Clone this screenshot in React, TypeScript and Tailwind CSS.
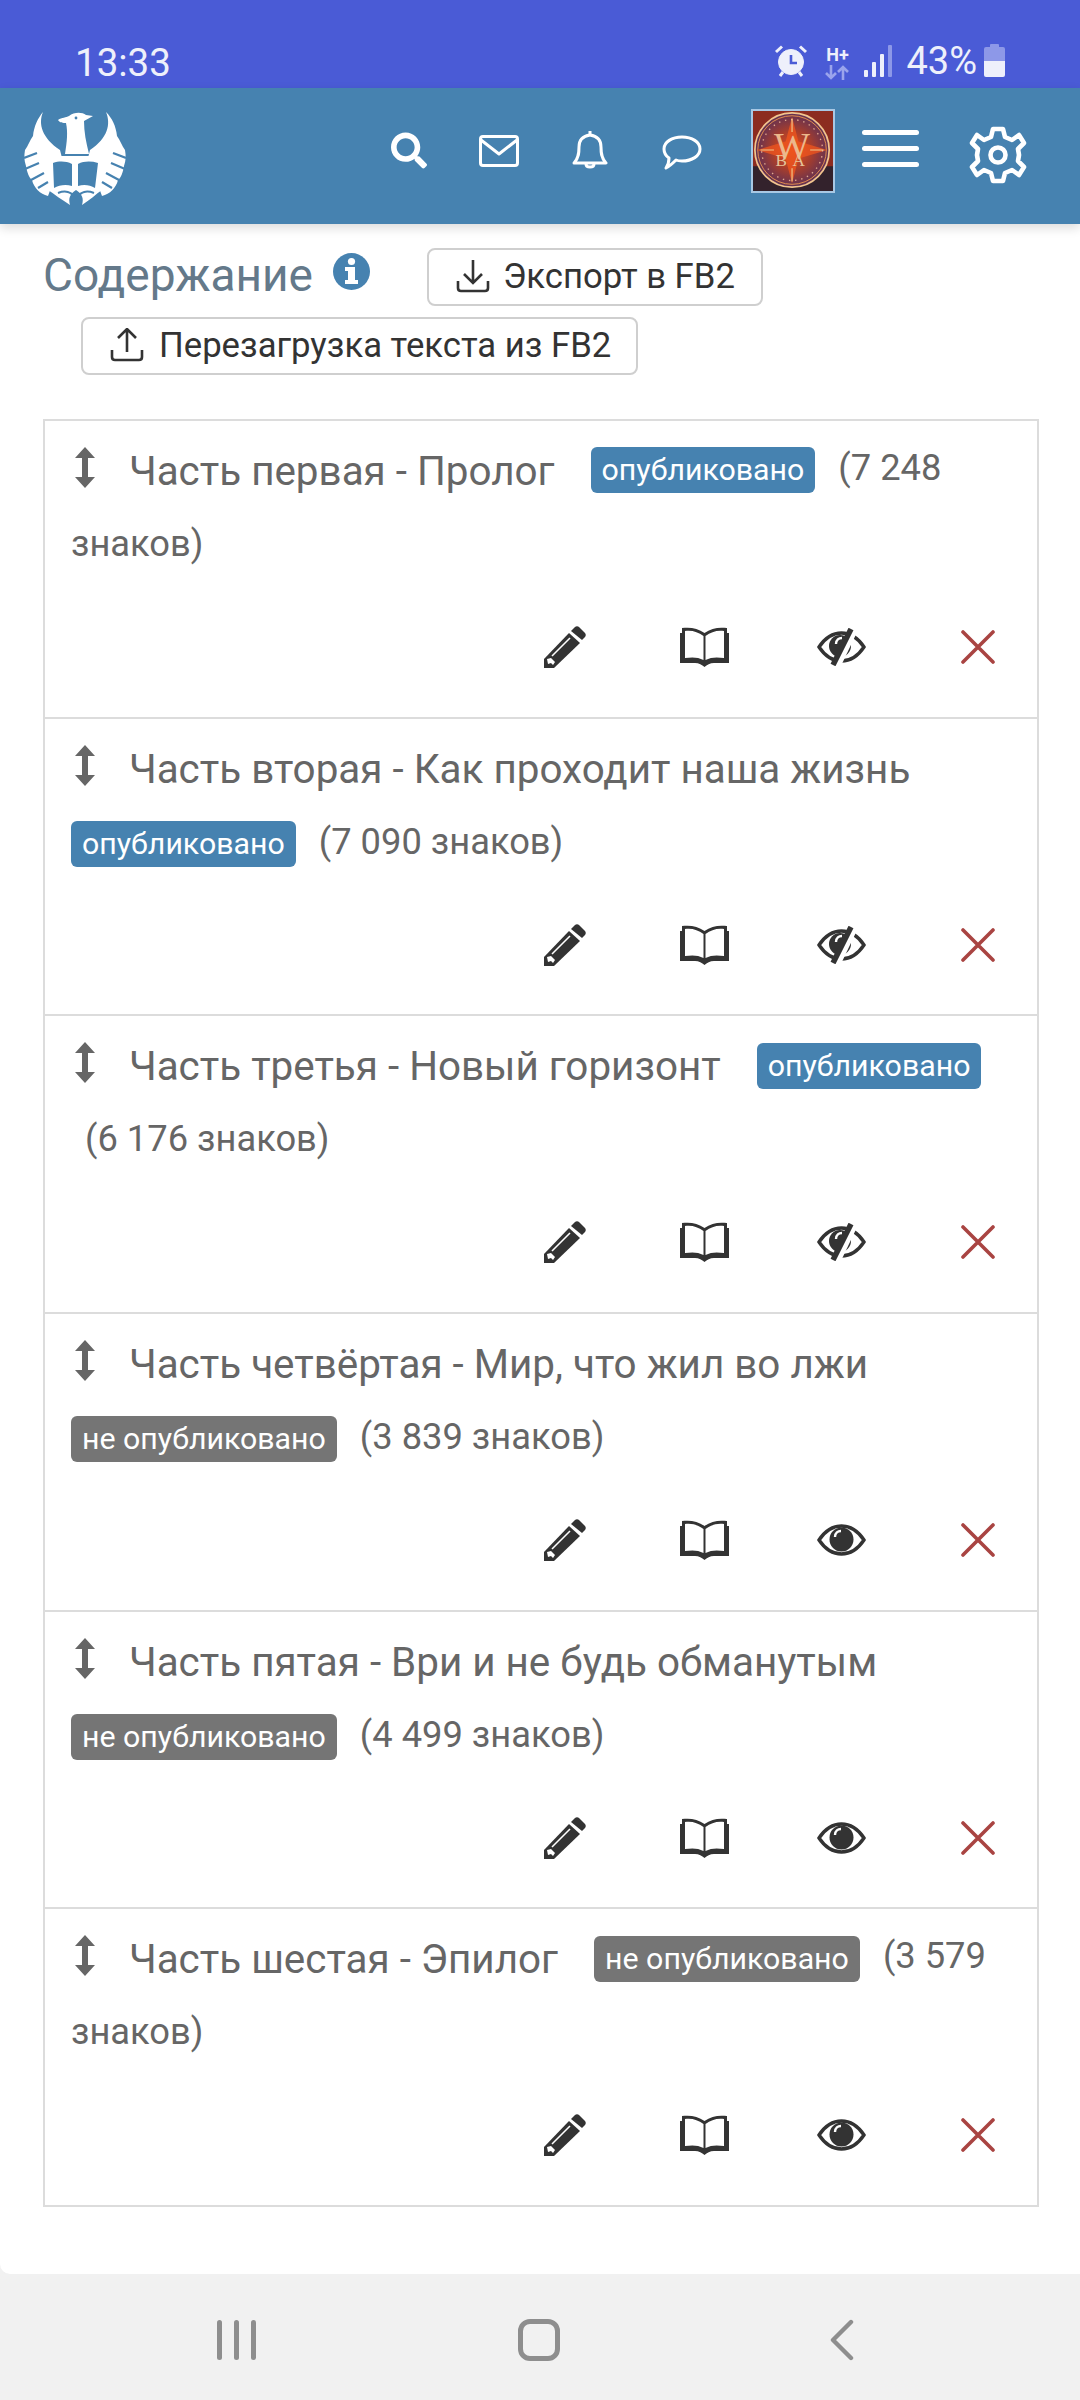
import React from 'react';
import { FaSearch } from 'react-icons/fa';

const parts = [
  { title: 'Часть первая - Пролог', count: '(7 248 знаков)', published: true },
  { title: 'Часть вторая - Как проходит наша жизнь', count: '(7 090 знаков)', published: true },
  { title: 'Часть третья - Новый горизонт', count: '(6 176 знаков)', published: true },
  { title: 'Часть четвёртая - Мир, что жил во лжи', count: '(3 839 знаков)', published: false },
  { title: 'Часть пятая - Ври и не будь обманутым', count: '(4 499 знаков)', published: false },
  { title: 'Часть шестая - Эпилог', count: '(3 579 знаков)', published: false },
];

const Logo = () => (
  <svg width="102" height="94" viewBox="0 0 102 94" fill="#fff">
    {/* head and neck */}
    <path d="M34 8 C38 5 42 6 45 4 C50 0 58 0 62 3 L69 4 L60 9 C60 20 62 30 65 42 L41 42 C43 30 44 20 42 11 C39 11 36 11 34 8 Z" />
    {/* left wing */}
    <path d="M19 0 C14 12 18 26 36 38 L38 46 L24 84 C16 82 10 76 8 68 C5 66 3 60 2 54 C0 48 0 44 1 38 C4 34 6 28 9 24 C10 14 14 6 19 0 Z" />
    {/* right wing */}
    <path d="M82 0 C87 12 84 26 66 38 L64 46 L78 84 C86 82 92 76 94 68 C97 66 99 60 100 54 C102 48 102 44 101 38 C98 34 96 28 93 24 C92 14 88 6 82 0 Z" />
    {/* book and tail */}
    <path d="M21 44 H83 L78 78 C72 82 66 88 58 93 C60 86 58 82 52 78 C46 82 44 86 46 93 C38 88 30 82 24 78 Z" />
    <path d="M29 51 C35 49 42 49 48 52 V74 C42 72 35 73 30 76 Z M54 52 C60 49 67 49 74 51 L71 76 C66 73 60 72 54 74 Z" fill="#4682b0" />
    <path d="M0 46 L13 41 M1 57 L15 51 M7 68 L20 61 M14 76 L24 70 M102 46 L89 41 M101 57 L87 51 M95 68 L82 61 M88 76 L78 70" stroke="#4682b0" strokeWidth="2.2" fill="none" />
    <path d="M34 81 C42 78 46 80 52 85 C58 80 62 78 70 81" stroke="#4682b0" strokeWidth="2" fill="none" />
    <circle cx="52" cy="6" r="1.4" fill="#4682b0" />
  </svg>
);

const Avatar = () => (
  <svg width="84" height="84" viewBox="0 0 84 84" className="block border-2 border-[#a8c8e4]">
    <defs>
      <radialGradient id="medal" cx="50%" cy="50%" r="52%">
        <stop offset="0%" stopColor="#e8501e" />
        <stop offset="50%" stopColor="#a83e2c" />
        <stop offset="100%" stopColor="#5a3058" />
      </radialGradient>
    </defs>
    <rect width="84" height="84" fill="#8c2c20" />
    <rect y="58" width="84" height="26" fill="#33222c" />
    <circle cx="41" cy="41" r="39" fill="url(#medal)" stroke="#f2c48e" strokeWidth="1.8" />
    <circle cx="41" cy="41" r="36" fill="none" stroke="#e8904e" strokeWidth="1" />
    <path d="M4 41 L41 30 L78 41 L41 52 Z M41 6 L50 41 L41 76 L32 41 Z" fill="#f0561e" opacity="0.75" />
    <circle cx="41" cy="41" r="32" fill="none" stroke="#e0a890" strokeWidth="1.4" strokeDasharray="1.5 5" />
    <path d="M41 8 V22 M41 60 V74 M8 41 H22 M60 41 H74" stroke="#f4c88a" strokeWidth="1.2" />
    <text x="41" y="50" textAnchor="middle" fontFamily="Liberation Serif, serif" fontSize="40" fill="#ecb88c">W</text>
    <text x="42" y="58" textAnchor="middle" fontFamily="Liberation Serif, serif" fontSize="18" letterSpacing="6" fill="#e6c49a">BA</text>
  </svg>
);

const MoveIcon = () => (
  <svg width="22" height="41" viewBox="0 0 22 41" fill="#666" className="inline-block ml-[3px] align-[-8px]">
    <path d="M11 0 L21 11 H14 V30 H21 L11 41 L1 30 H8 V11 H1 Z" />
  </svg>
);

const PencilIcon = () => (
  <svg width="42" height="42" viewBox="0 0 42 42" fill="#333">
    <path d="M0 42 V33 L25 7 L36 17 L10 42 Z" />
    <path d="M27 5 L31 1 C32 0 34 0 35 1 L41 7 C42 8 42 10 41 11 L38 14 Z" />
    <path d="M26 12 L8 30" stroke="#fff" strokeWidth="1.6" />
    <path d="M3 33 L7 32 L11 36 L9 39 L7 37 L4 38 Z" fill="#fff" />
  </svg>
);

const BookIcon = () => (
  <svg width="49" height="40" viewBox="0 0 49 40" fill="#333">
    <path d="M2 1 C10 0 18 1 24.5 6 C31 1 39 0 47 1 V6 H49 V36 H34 C30 36 27 38 24.5 40 C22 38 19 36 15 36 H0 V6 H2 Z" />
    <path d="M5 4 C12 3 18 5 23.5 9 V33 C18 30 12 30 5 31 Z M25.5 9 C31 5 37 3 44 4 V31 C37 30 31 30 25.5 33 Z" fill="#fff" />
  </svg>
);

const EyeIcon = () => (
  <svg width="49" height="32" viewBox="0 0 49 32" fill="none">
    <path d="M2 16 C8 7 16 2 24.5 2 C33 2 41 7 47 16 C41 25 33 30 24.5 30 C16 30 8 25 2 16 Z" stroke="#333" strokeWidth="3.4" />
    <circle cx="24.5" cy="15.5" r="12" fill="#333" />
    <path d="M18 13 C18 9 21 7 24 7" stroke="#fff" strokeWidth="2.4" />
  </svg>
);

const EyeOffIcon = () => (
  <svg width="49" height="38" viewBox="0 0 49 38" fill="none">
    <path d="M2 19 C8 10 16 5 24.5 5 C33 5 41 10 47 19 C41 28 33 33 24.5 33 C16 33 8 28 2 19 Z" stroke="#333" strokeWidth="3.4" />
    <circle cx="23" cy="18" r="11" fill="#333" />
    <path d="M19 16 C19 12 22 10 25 10" stroke="#fff" strokeWidth="2.4" />
    <path d="M38 -2 L18 40" stroke="#fff" strokeWidth="9" />
    <path d="M34 1 L16 37" stroke="#333" strokeWidth="5.5" />
  </svg>
);

const CloseIcon = () => (
  <svg width="34" height="34" viewBox="0 0 34 34" stroke="#a94442" strokeWidth="3.6" strokeLinecap="round">
    <path d="M2 2 L32 32 M32 2 L2 32" />
  </svg>
);

const StatusBar = () => (
  <div className="h-[88px] bg-[#4a5bd6] flex items-start text-[#eef0fb] relative shrink-0">
    <span className="ml-[75px] mt-[40px] text-[38.5px] leading-[46px]">13:33</span>
    <div className="ml-auto mr-[75px] mt-[44px] flex items-start">
      {/* alarm */}
      <svg width="34" height="34" viewBox="0 0 34 34" fill="#eef0fb" stroke="#eef0fb">
        <circle cx="17" cy="18" r="12.5" />
        <path d="M2 8 L8 2.5 M32 8 L26 2.5 M6 32 L9 28 M28 32 L25 28" strokeWidth="3" fill="none" />
        <path d="M17 11 V19 H23" stroke="#4a5bd6" strokeWidth="2.6" fill="none" />
      </svg>
      <div className="ml-[17px] w-[24px] flex flex-col items-center">
        <span className="text-[18px] leading-[16px] font-bold mt-[3px]">H+</span>
        <svg width="24" height="15" viewBox="0 0 24 15" fill="none" stroke="#9aa4ec" strokeWidth="2.6" className="mt-[2px]">
          <path d="M6 0 V13 M1 8 L6 13 L11 8 M18 15 V2 M13 7 L18 2 L23 7" />
        </svg>
      </div>
      <svg width="28" height="32" viewBox="0 0 28 32" className="ml-[15px] mt-[1px]">
        <rect x="0" y="25" width="4" height="7" rx="1" fill="#eef0fb" />
        <rect x="8" y="17" width="4" height="15" rx="1" fill="#eef0fb" />
        <rect x="16" y="9" width="4" height="23" rx="1" fill="#eef0fb" />
        <rect x="24" y="0" width="4" height="32" rx="1" fill="#8d98e8" />
      </svg>
      <span className="ml-[14px] text-[38px] leading-[34px]">43%</span>
      <svg width="21" height="33" viewBox="0 0 21 33" className="ml-[7px] mt-[0px]">
        <path d="M6 3 V1 Q6 0 7 0 H14 Q15 0 15 1 V3 H19 Q21 3 21 5 V17 H0 V5 Q0 3 2 3 Z" fill="#8d98e8" />
        <path d="M0 17 H21 V31 Q21 33 19 33 H2 Q0 33 0 31 Z" fill="#eef0fb" />
      </svg>
    </div>
  </div>
);

const Header = () => (
  <header className="h-[136px] bg-[#4682b0] flex items-start shrink-0 text-white shadow-[0_4px_10px_rgba(0,0,0,0.14)] relative z-10">
    <div className="ml-[24px] mt-[24px]"><Logo /></div>
    <FaSearch className="ml-[265px] mt-[44px] w-[36px] h-[37px]" />
    <svg width="40" height="32" viewBox="0 0 40 32" fill="none" stroke="#fff" strokeWidth="3" strokeLinejoin="round" className="ml-[52px] mt-[47px]">
      <rect x="1.5" y="1.5" width="37" height="29" rx="2.5" />
      <path d="M2 5 L20 19 L38 5" />
    </svg>
    <svg width="36" height="39" viewBox="0 0 36 39" fill="none" stroke="#fff" strokeWidth="3" strokeLinejoin="round" className="ml-[53px] mt-[42px]">
      <path d="M2 33 C7 28 7 22 7 17 C7 10 11 6 18 5 C25 6 29 10 29 17 C29 22 29 28 34 33 Z" />
      <path d="M18 1 V5 M14 34 C14 38 22 38 22 34" />
    </svg>
    <svg width="40" height="35" viewBox="0 0 40 35" fill="none" stroke="#fff" strokeWidth="3" strokeLinejoin="round" className="ml-[54px] mt-[47px]">
      <path d="M20 2 C30 2 38 7 38 14 C38 21 30 26 20 26 C18 26 16 26 14 25 C11 28 8 31 4 33 C6 30 7 27 7 23 C4 21 2 18 2 14 C2 7 10 2 20 2 Z" />
    </svg>
    <div className="ml-[49px] mt-[21px]"><Avatar /></div>
    <div className="ml-[27px] mt-[42px] w-[57px] flex flex-col gap-[11px]">
      <div className="h-[5px] rounded-full bg-white" />
      <div className="h-[5px] rounded-full bg-white" />
      <div className="h-[5px] rounded-full bg-white" />
    </div>
    <svg width="58" height="58" viewBox="0 0 58 58" fill="none" stroke="#fff" strokeWidth="4.6" strokeLinejoin="round" className="ml-[50px] mt-[38px]">
      <path d="M24 3 H34 L36 11 L43 14 L50 9 L55 17 L49 23 L50 29 L49 35 L55 41 L50 49 L43 44 L36 47 L34 55 H24 L22 47 L15 44 L8 49 L3 41 L9 35 L8 29 L9 23 L3 17 L8 9 L15 14 L22 11 Z" />
      <circle cx="29" cy="29" r="7.5" />
    </svg>
  </header>
);

const Toolbar = () => (
  <div className="pt-[24px]">
    <div className="flex items-start pl-[43px]">
      <h2 className="text-[46px] leading-[64px] mt-[-5px] font-normal text-[#64798a]">Содержание</h2>
      <svg width="37" height="37" viewBox="0 0 37 37" className="ml-[20px] mt-[5px]">
        <ellipse cx="18.5" cy="18.5" rx="18.5" ry="18.5" fill="#4682b0" />
        <circle cx="18.5" cy="8.5" r="3.6" fill="#fff" />
        <path d="M12 14 H22 V27 H25 V31 H12 V27 H15 V18 H12 Z" fill="#fff" />
      </svg>
      <button className="ml-[57px] h-[58px] w-[336px] flex items-center border-2 border-[#cfcfcf] rounded-[8px] pl-[27px] pb-[2px] text-[34.7px] text-[#333]">
        <svg width="34" height="34" viewBox="0 0 34 34" fill="none" stroke="#333" strokeWidth="2.6" className="shrink-0">
          <path d="M17 1 V23 M8 15 L17 24 L26 15 M2 22 V29 Q2 32 5 32 H29 Q32 32 32 29 V22" />
        </svg>
        <span className="ml-[13px] whitespace-nowrap">Экспорт в FB2</span>
      </button>
    </div>
    <button className="ml-[81px] mt-[10px] h-[58px] w-[557px] flex items-center border-2 border-[#cfcfcf] rounded-[8px] pl-[27px] pb-[2px] text-[34.7px] text-[#333]">
      <svg width="34" height="34" viewBox="0 0 34 34" fill="none" stroke="#333" strokeWidth="2.6" className="shrink-0">
        <path d="M17 24 V2 M8 10 L17 1 L26 10 M2 22 V29 Q2 32 5 32 H29 Q32 32 32 29 V22" />
      </svg>
      <span className="ml-[15px] whitespace-nowrap">Перезагрузка текста из FB2</span>
    </button>
  </div>
);

const PartRow: React.FC<{ part: (typeof parts)[0] }> = ({ part }) => (
  <div className="h-[297.67px] border-t-2 border-[#dcdcdc] flex flex-col">
    <div className="px-[26px] pt-[9px] h-[164px] text-[36.3px] leading-[76px] text-[#666]">
      <MoveIcon />
      <span className="ml-[33px] mr-[27px] text-[40.4px] leading-none align-[-5px]">{part.title}</span>{' '}
      <span
        className={`inline-block h-[46px] px-[11px] rounded-[6px] text-[30.3px] leading-[46px] text-white align-middle ${
          part.published ? 'bg-[#4682b0]' : 'bg-[#757575]'
        }`}
      >
        {part.published ? 'опубликовано' : 'не опубликовано'}
      </span>{' '}
      <span className="ml-[14px]">{part.count}</span>
    </div>
    <div className="flex-1 flex items-start justify-end pr-[33px]">
      <div className="flex items-center h-[42px] mt-[41px]">
        <div className="w-[140px] flex justify-center"><PencilIcon /></div>
        <div className="w-[138px] flex justify-center"><BookIcon /></div>
        <div className="w-[137px] flex justify-center">{part.published ? <EyeOffIcon /> : <EyeIcon />}</div>
        <div className="w-[94px] flex justify-end pr-[9px]"><CloseIcon /></div>
      </div>
    </div>
  </div>
);

const NavBar = () => (
  <div className="h-[126px] flex items-start shrink-0">
    <div className="ml-[217px] mt-[46px] flex gap-[12px]">
      <div className="w-[5px] h-[40px] rounded-full bg-[#8e8e8e]" />
      <div className="w-[5px] h-[40px] rounded-full bg-[#8e8e8e]" />
      <div className="w-[5px] h-[40px] rounded-full bg-[#8e8e8e]" />
    </div>
    <div className="ml-[262px] mt-[45px] w-[42px] h-[42px] rounded-[12px] border-[5px] border-[#8e8e8e]" />
    <svg width="24" height="42" viewBox="0 0 24 42" fill="none" stroke="#8e8e8e" strokeWidth="4.4" strokeLinecap="round" strokeLinejoin="round" className="ml-[270px] mt-[45px]">
      <path d="M21 3 L3 21 L21 39" />
    </svg>
  </div>
);

export default function App() {
  return (
    <div className="w-[1080px] h-[2400px] bg-[#f1f1f1] flex flex-col overflow-hidden font-['Roboto',sans-serif]">
      <StatusBar />
      <Header />
      <main className="flex-1 bg-white rounded-bl-[10px]">
        <Toolbar />
        <div className="ml-[43px] mr-[41px] mt-[44px] border-x-2 border-b-2 border-[#dcdcdc]">
          {parts.map(p => (
            <PartRow key={p.title} part={p} />
          ))}
        </div>
      </main>
      <NavBar />
    </div>
  );
}
